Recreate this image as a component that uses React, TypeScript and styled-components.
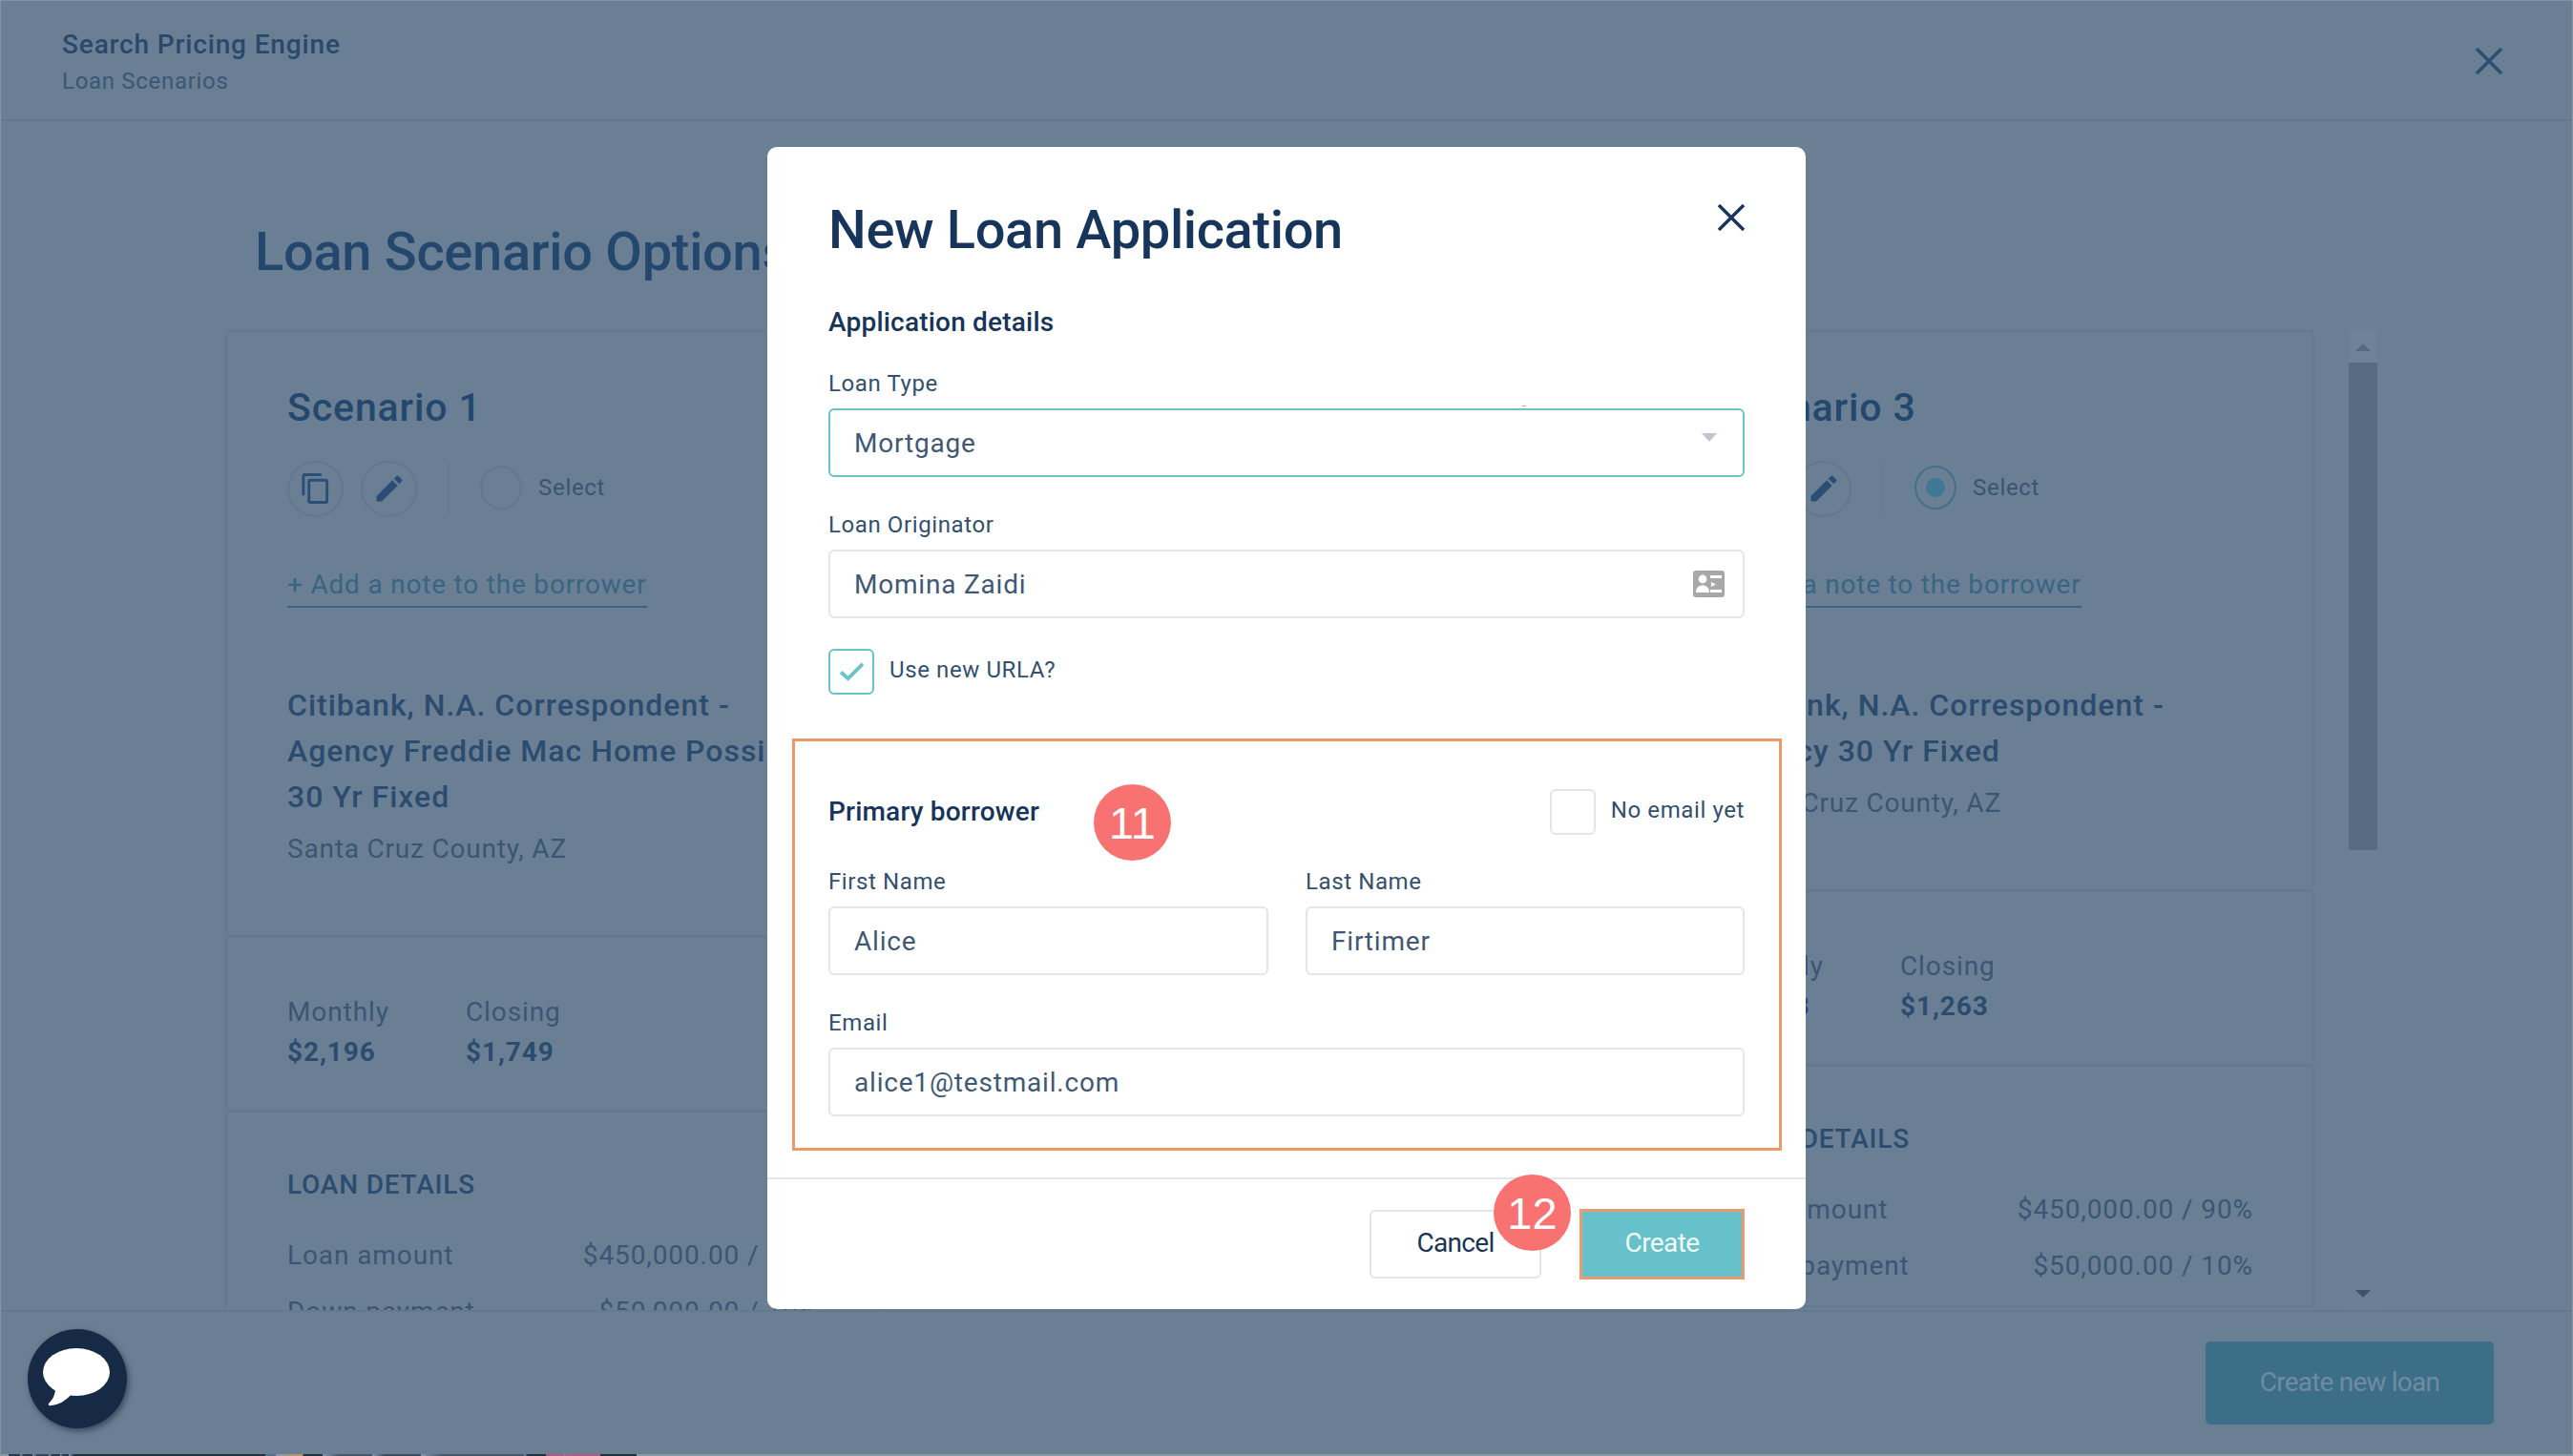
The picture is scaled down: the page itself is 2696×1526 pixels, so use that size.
import styled, { createGlobalStyle } from 'styled-components';

const GlobalStyle = createGlobalStyle`
  html, body {
    margin: 0;
    padding: 0;
    width: 2696px;
    height: 1526px;
    overflow: hidden;
    background: #6b7f94;
    font-family: Roboto, "Liberation Sans", sans-serif;
  }
  * { box-sizing: border-box; }
`;

const Page = styled.div`
  position: relative;
  width: 2696px;
  height: 1526px;
  display: flex;
  flex-direction: column;
  overflow: hidden;
  background: #6b7f94;
  border: 1px solid #8593a3;
  border-bottom: 0;
`;

const TopBar = styled.header`
  flex: 0 0 126px;
  display: flex;
  align-items: flex-start;
  justify-content: space-between;
  padding: 28px 73px 0 64px;
  border-bottom: 2px solid #64788e;
`;

const TopBarTitle = styled.div`
  font-size: 28px;
  line-height: 36px;
  font-weight: 500;
  letter-spacing: 0.85px;
  color: #29496b;
`;

const TopBarSub = styled.div`
  font-size: 24px;
  line-height: 30px;
  margin-top: 5px;
  letter-spacing: 0.7px;
  color: #3a5674;
`;

const IconButton = styled.button<{ $color: string }>`
  border: 0;
  padding: 0;
  background: none;
  display: block;
  color: ${({ $color }) => $color};
`;

const TopClose = styled(IconButton)`
  margin-top: 21px;
`;

const Main = styled.main`
  flex: 1;
  min-height: 0;
  overflow: hidden;
  padding: 104px 0 0 235px;
`;

const PageHeading = styled.h1`
  margin: 0 0 50px 31px;
  font-size: 56px;
  line-height: 66px;
  font-weight: 500;
  letter-spacing: -0.3px;
  color: #24486d;
`;

const ScenarioRow = styled.div`
  display: flex;
  align-items: flex-start;
`;

const Card = styled.section`
  flex: 0 0 686px;
  margin-right: 65.5px;

  &:last-of-type {
    margin-right: 36px;
  }
`;

const CardBlock = styled.div<{ $height?: number; $pad?: number }>`
  height: ${({ $height }) => ($height ? `${$height}px` : 'auto')};
  padding: ${({ $pad }) => $pad ?? 0}px 62px 0 63px;
  border: 2px solid #64788e;
  border-radius: 5px;
  margin-top: -1px;
`;

const ScenarioName = styled.h2`
  margin: 0;
  font-size: 41px;
  line-height: 50px;
  font-weight: 500;
  letter-spacing: 0.9px;
  color: #24486d;
`;

const ActionRow = styled.div`
  display: flex;
  align-items: center;
  margin-top: 30px;
`;

const RoundAction = styled.button`
  width: 59px;
  height: 59px;
  padding: 0;
  margin-right: 18px;
  display: flex;
  align-items: center;
  justify-content: center;
  background: none;
  border: 2px solid #62778d;
  border-radius: 50%;
  color: #2b4f74;
`;

const ActionDivider = styled.div`
  width: 2px;
  height: 60px;
  margin: 0 32px 0 14px;
  background: #667a90;
`;

const Radio = styled.span<{ $checked?: boolean }>`
  width: 44px;
  height: 46px;
  margin: -3px 17px 0 0;
  display: flex;
  align-items: center;
  justify-content: center;
  border-radius: 50%;
  border: 2px solid ${({ $checked }) => ($checked ? '#41708c' : '#62778d')};

  &::after {
    content: '';
    display: ${({ $checked }) => ($checked ? 'block' : 'none')};
    width: 20px;
    height: 20px;
    border-radius: 50%;
    background: #3f7795;
  }
`;

const SelectText = styled.span`
  margin-top: -3px;
  font-size: 24px;
  letter-spacing: 0.7px;
  color: #3a5470;
`;

const NoteLink = styled.a`
  display: inline-block;
  margin-top: 53px;
  padding-bottom: 4px;
  font-size: 28px;
  line-height: 36px;
  letter-spacing: 0.8px;
  color: #386583;
  border-bottom: 2px solid #386583;
`;

const ProductName = styled.div`
  margin-top: 78px;
  font-size: 32px;
  line-height: 48px;
  font-weight: 500;
  letter-spacing: 1px;
  white-space: nowrap;
  color: #2b4c6f;
`;

const County = styled.div`
  margin-top: 13px;
  font-size: 28px;
  line-height: 36px;
  letter-spacing: 0.8px;
  color: #3a5674;
`;

const Figures = styled.div`
  display: flex;
`;

const Figure = styled.div`
  width: 187px;
`;

const FigureLabel = styled.div`
  font-size: 28px;
  line-height: 38px;
  letter-spacing: 0.9px;
  color: #3a5674;
`;

const FigureValue = styled.div`
  margin-top: 4px;
  font-size: 28px;
  line-height: 38px;
  font-weight: 700;
  letter-spacing: 0.9px;
  color: #2b4c6f;
`;

const DetailsHeading = styled.div`
  font-size: 28px;
  line-height: 36px;
  font-weight: 500;
  letter-spacing: 0.8px;
  color: #2b4c6f;
`;

const DetailRows = styled.div`
  margin-top: 38px;
`;

const DetailRow = styled.div`
  display: flex;
  justify-content: space-between;
  height: 59px;
  font-size: 28px;
  line-height: 36px;
  letter-spacing: 0.9px;
  color: #3a5674;
  white-space: nowrap;
`;

const Scrollbar = styled.div`
  flex: 0 0 30px;
  height: 1025px;
  display: flex;
  flex-direction: column;
  background: #6c8095;
`;

const ScrollArrow = styled.div<{ $down?: boolean }>`
  flex: 0 0 33px;
  display: flex;
  align-items: center;
  justify-content: center;
  background: ${({ $down }) => ($down ? 'none' : '#6f8297')};

  &::after {
    content: '';
    width: 0;
    height: 0;
    border-left: 8px solid transparent;
    border-right: 8px solid transparent;
    ${({ $down }) =>
      $down ? 'border-top: 8px solid #3f5268;' : 'border-bottom: 8px solid #56697f;'}
  }
`;

const ScrollThumb = styled.div`
  flex: 0 0 511px;
  background: #586c81;
`;

const ScrollRest = styled.div`
  flex: 1;
`;

const Footer = styled.footer`
  flex: 0 0 153px;
  display: flex;
  align-items: flex-start;
  justify-content: flex-end;
  padding: 31px 82px 0 0;
  border-top: 2px solid #64788e;
  background: #6b7f94;
  position: relative;
`;

const CreateLoanButton = styled.button`
  width: 302px;
  height: 87px;
  padding: 0 0 3px;
  border: 0;
  border-radius: 5px;
  background: #3d6e88;
  color: #6e8ca1;
  font-family: inherit;
  font-size: 28px;
  letter-spacing: -0.8px;
`;

const ChatBubble = styled.div`
  position: absolute;
  left: 28px;
  top: 1392px;
  width: 104px;
  height: 104px;
  padding: 0 3px 4px 0;
  display: flex;
  align-items: center;
  justify-content: center;
  border-radius: 50%;
  background: #172a45;
  box-shadow: 2px 3px 6px rgba(20, 30, 45, 0.55);
`;

// sliver of the page under the window, visible along the bottom edge
const stripSegments: [number, number, string][] = [
  [8, 20, '#2d3a4a'],
  [24, 33, '#2d3a4a'],
  [38, 50, '#3b4857'],
  [54, 62, '#2d3a4a'],
  [65, 71, '#2d3a4a'],
  [77, 277, '#26323f'],
  [277, 288, '#58708c'],
  [306, 316, '#b0986c'],
  [317, 337, '#26323f'],
  [354, 389, '#4a5766'],
  [402, 440, '#3f4c5b'],
  [462, 548, '#4a5766'],
  [552, 571, '#26323f'],
  [571, 590, '#b05a8a'],
  [592, 628, '#b05a8a'],
  [628, 666, '#26323f'],
];

const stripGradient = stripSegments
  .map(([from, to, color]) => `${color} ${from}px ${to}px, #8b97a5 ${to}px`)
  .join(', ');

const BottomStrip = styled.div`
  position: absolute;
  left: 0;
  right: 0;
  bottom: 0;
  height: 2px;
  background: linear-gradient(to right, #8b97a5 8px, ${stripGradient});
`;

const Overlay = styled.div`
  position: absolute;
  inset: 0;
  display: flex;
  justify-content: center;
  padding-top: 153px;
`;

const Modal = styled.div`
  position: relative;
  width: 1088px;
  height: 1218px;
  background: #fff;
  border-radius: 10px;
  display: flex;
  flex-direction: column;
`;

const ModalBody = styled.div`
  flex: 1;
  padding: 0 64px;
`;

const ModalHeader = styled.div`
  height: 166px;
  padding-top: 54px;
  display: flex;
  justify-content: space-between;
  align-items: flex-start;
`;

const ModalTitle = styled.h2`
  margin: 0;
  font-size: 56px;
  line-height: 66px;
  font-weight: 500;
  letter-spacing: -0.35px;
  color: #17345a;
`;

const ModalClose = styled(IconButton)`
  margin-top: 6px;
`;

const SectionTitle = styled.h3`
  margin: 0;
  font-size: 28px;
  line-height: 36px;
  font-weight: 500;
  letter-spacing: 0.2px;
  color: #17345a;
`;

const Field = styled.div<{ $top: number }>`
  margin-top: ${({ $top }) => $top}px;
  min-width: 0;
`;

const FieldLabel = styled.label`
  display: block;
  font-size: 24px;
  line-height: 30px;
  letter-spacing: 0.6px;
  color: #33506e;
  margin-bottom: 11px;
`;

const InputBox = styled.div<{ $active?: boolean }>`
  position: relative;
  height: 72px;
  display: flex;
  align-items: center;
  justify-content: space-between;
  padding: 0 19px 0 25px;
  border: 2px solid ${({ $active }) => ($active ? '#69c3cb' : '#e2e5e9')};
  border-radius: 6px;
  font-size: 28px;
  letter-spacing: 0.8px;
  color: #3f5874;
`;

const Caret = styled.span`
  width: 0;
  height: 0;
  margin: -12px 8px 0 0;
  border-left: 8px solid transparent;
  border-right: 8px solid transparent;
  border-top: 9px solid #c0c6d0;
`;

const FleckMark = styled.span`
  position: absolute;
  left: 725px;
  top: -5px;
  width: 4px;
  height: 1px;
  background: #eaa47e;
`;

const CheckRow = styled.div`
  display: flex;
  align-items: center;
  gap: 16px;
  font-size: 24px;
  letter-spacing: 0.6px;
  color: #33506e;
`;

const UrlaRow = styled(CheckRow)`
  margin-top: 32px;
  padding-bottom: 4px;
`;

const CheckLabel = styled.span`
  margin-top: -4px;
`;

const CheckBox = styled.span<{ $checked?: boolean }>`
  width: 48px;
  height: 48px;
  display: flex;
  align-items: center;
  justify-content: center;
  border: 2px solid ${({ $checked }) => ($checked ? '#69c3cb' : '#e2e5e9')};
  border-radius: 6px;
`;

const BorrowerBox = styled.div`
  margin: 42px -39px 0 -38px;
  height: 432px;
  padding: 50px 36px 0 35px;
  border: 3px solid #ec9a6c;
`;

const BorrowerHead = styled.div`
  display: flex;
  justify-content: space-between;
  align-items: flex-start;
  height: 82px;
`;

const BorrowerTitle = styled(SectionTitle)`
  margin-top: 6px;
`;

const NameGrid = styled.div`
  display: grid;
  grid-template-columns: 461px 460px;
  justify-content: space-between;
`;

const Badge = styled.span`
  position: absolute;
  width: 81px;
  height: 80px;
  display: flex;
  align-items: center;
  justify-content: center;
  border-radius: 50%;
  background: #f87272;
  color: #fff;
  font-family: "Liberation Sans", Arial, sans-serif;
  font-size: 47px;
`;

const BorrowerBadge = styled(Badge)`
  left: 342px;
  top: 668px;
`;

const ButtonBadge = styled(Badge)`
  left: 761px;
  top: 1077px;
`;

const ModalFooter = styled.div`
  flex: 0 0 138px;
  display: flex;
  justify-content: flex-end;
  gap: 40px;
  padding: 31px 64px 0 0;
  border-top: 2px solid #e3e6ea;
`;

const CancelButton = styled.button`
  width: 180px;
  height: 72px;
  margin-top: 1px;
  padding: 0 0 3px;
  border: 2px solid #e2e5ea;
  border-radius: 6px;
  background: #fff;
  color: #1a3555;
  font-family: inherit;
  font-size: 28px;
  letter-spacing: -0.7px;
`;

const CreateButton = styled.button`
  width: 173px;
  height: 74px;
  padding: 0 0 3px;
  border: 3px solid #ec9a6c;
  background: #67c1ca;
  color: #f2fbfc;
  font-family: inherit;
  font-size: 28px;
  letter-spacing: -0.6px;
`;

const MiddleGap = styled.div`
  flex: 0 0 751.5px;
`;

const Cross = ({ size, width }: { size: number; width: number }) => (
  <svg width={size} height={size} viewBox="0 0 28 28" fill="none" stroke="currentColor" strokeWidth={width}>
    <path d="M1 1 27 27M27 1 1 27" />
  </svg>
);

const CopyIcon = () => (
  <svg width="32" height="32" viewBox="3 1 18 22" fill="currentColor">
    <path d="M16 1H4a2 2 0 0 0-2 2v14h2V3h12V1zm3 4H8a2 2 0 0 0-2 2v14a2 2 0 0 0 2 2h11a2 2 0 0 0 2-2V7a2 2 0 0 0-2-2zm0 16H8V7h11v14z" />
  </svg>
);

const PencilIcon = () => (
  <svg width="36" height="36" viewBox="0 0 24 24" fill="currentColor">
    <path d="M3 17.25V21h3.75L17.81 9.94l-3.75-3.75L3 17.25zM20.71 7.04a1 1 0 0 0 0-1.41l-2.34-2.34a1 1 0 0 0-1.41 0l-1.83 1.83 3.75 3.75 1.83-1.83z" />
  </svg>
);

const ContactCardIcon = () => (
  <svg width="33" height="28" viewBox="0 0 33 28">
    <rect width="33" height="28" rx="3" fill="#a8a8a8" />
    <circle cx="10" cy="9" r="4.4" fill="#fff" />
    <path d="M3 23c0-5 3-7.5 7-7.5s7 2.5 7 7.5z" fill="#fff" />
    <path d="M18 5h12v3H18zM19 12l5 2.5-5 2.5zM18 20h12v3H18z" fill="#fff" />
  </svg>
);

const CheckMark = () => (
  <svg width="27" height="20" viewBox="0 0 28 21" fill="none" stroke="#69c3cb" strokeWidth="4">
    <path d="M2 11 10 18 26 2" />
  </svg>
);

const SpeechIcon = () => (
  <svg width="70" height="61" viewBox="0 0 70 61" fill="#fff">
    <ellipse cx="35" cy="25" rx="35" ry="25" />
    <path d="M13 42C13 50 9 55 6 58C5 60 7 60.5 9 60C17 59 24 55 29 49z" />
  </svg>
);

type Scenario = {
  name: string;
  selected?: boolean;
  product: string[];
  monthly: string;
  closing: string;
  topHeight: number;
  amount: string;
  down: string;
};

const scenarios: Scenario[] = [
  {
    name: 'Scenario 1',
    product: ['Citibank, N.A. Correspondent -', 'Agency Freddie Mac Home Possible', '30 Yr Fixed'],
    monthly: '$2,196',
    closing: '$1,749',
    topHeight: 636,
    amount: '$450,000.00 / 90%',
    down: '$50,000.00 / 10%',
  },
  {
    name: 'Scenario 3',
    selected: true,
    product: ['Citibank, N.A. Correspondent -', 'Agency 30 Yr Fixed'],
    monthly: '$2,193',
    closing: '$1,263',
    topHeight: 588,
    amount: '$450,000.00 / 90%',
    down: '$50,000.00 / 10%',
  },
];

const ScenarioCard = ({ scenario }: { scenario: Scenario }) => (
  <Card>
    <CardBlock $height={scenario.topHeight} $pad={54}>
      <ScenarioName>{scenario.name}</ScenarioName>
      <ActionRow>
        <RoundAction>
          <CopyIcon />
        </RoundAction>
        <RoundAction>
          <PencilIcon />
        </RoundAction>
        <ActionDivider />
        <Radio $checked={scenario.selected} />
        <SelectText>Select</SelectText>
      </ActionRow>
      <NoteLink>+ Add a note to the borrower</NoteLink>
      <ProductName>
        {scenario.product.map(line => (
          <div key={line}>{line}</div>
        ))}
      </ProductName>
      <County>Santa Cruz County, AZ</County>
    </CardBlock>
    <CardBlock $height={184} $pad={59}>
      <Figures>
        <Figure>
          <FigureLabel>Monthly</FigureLabel>
          <FigureValue>{scenario.monthly}</FigureValue>
        </Figure>
        <Figure>
          <FigureLabel>Closing</FigureLabel>
          <FigureValue>{scenario.closing}</FigureValue>
        </Figure>
      </Figures>
    </CardBlock>
    <CardBlock $pad={58}>
      <DetailsHeading>LOAN DETAILS</DetailsHeading>
      <DetailRows>
        <DetailRow>
          <span>Loan amount</span>
          <span>{scenario.amount}</span>
        </DetailRow>
        <DetailRow>
          <span>Down payment</span>
          <span>{scenario.down}</span>
        </DetailRow>
      </DetailRows>
    </CardBlock>
  </Card>
);

const App = () => {
  return (
    <Page>
      <GlobalStyle />
      <TopBar>
        <div>
          <TopBarTitle>Search Pricing Engine</TopBarTitle>
          <TopBarSub>Loan Scenarios</TopBarSub>
        </div>
        <TopClose $color="#2b4f74">
          <Cross size={28} width={3.4} />
        </TopClose>
      </TopBar>
      <Main>
        <PageHeading>Loan Scenario Options</PageHeading>
        <ScenarioRow>
          <ScenarioCard scenario={scenarios[0]} />
          <MiddleGap />
          <ScenarioCard scenario={scenarios[1]} />
          <Scrollbar>
            <ScrollArrow />
            <ScrollThumb />
            <ScrollRest />
            <ScrollArrow $down />
          </Scrollbar>
        </ScenarioRow>
      </Main>
      <Footer>
        <CreateLoanButton>Create new loan</CreateLoanButton>
      </Footer>
      <ChatBubble>
        <SpeechIcon />
      </ChatBubble>
      <BottomStrip />
      <Overlay>
        <Modal>
          <ModalBody>
            <ModalHeader>
              <ModalTitle>New Loan Application</ModalTitle>
              <ModalClose $color="#17345a">
                <Cross size={28} width={3.4} />
              </ModalClose>
            </ModalHeader>
            <SectionTitle>Application details</SectionTitle>
            <Field $top={31}>
              <FieldLabel>Loan Type</FieldLabel>
              <InputBox $active>
                Mortgage
                <Caret />
                <FleckMark />
              </InputBox>
            </Field>
            <Field $top={35}>
              <FieldLabel>Loan Originator</FieldLabel>
              <InputBox>
                Momina Zaidi
                <ContactCardIcon />
              </InputBox>
            </Field>
            <UrlaRow>
              <CheckBox $checked>
                <CheckMark />
              </CheckBox>
              <CheckLabel>Use new URLA?</CheckLabel>
            </UrlaRow>
            <BorrowerBox>
              <BorrowerHead>
                <BorrowerTitle>Primary borrower</BorrowerTitle>
                <CheckRow>
                  <CheckBox />
                  <CheckLabel>No email yet</CheckLabel>
                </CheckRow>
              </BorrowerHead>
              <NameGrid>
                <Field $top={0}>
                  <FieldLabel>First Name</FieldLabel>
                  <InputBox>Alice</InputBox>
                </Field>
                <Field $top={0}>
                  <FieldLabel>Last Name</FieldLabel>
                  <InputBox>Firtimer</InputBox>
                </Field>
              </NameGrid>
              <Field $top={35}>
                <FieldLabel>Email</FieldLabel>
                <InputBox>alice1@testmail.com</InputBox>
              </Field>
            </BorrowerBox>
          </ModalBody>
          <ModalFooter>
            <CancelButton>Cancel</CancelButton>
            <CreateButton>Create</CreateButton>
          </ModalFooter>
          <BorrowerBadge>11</BorrowerBadge>
          <ButtonBadge>12</ButtonBadge>
        </Modal>
      </Overlay>
    </Page>
  );
};

export default App;
